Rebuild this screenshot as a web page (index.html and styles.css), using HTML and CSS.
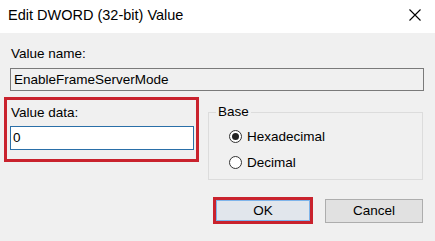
FILE: index.html
```html
<!DOCTYPE html>
<html>
<head>
<meta charset="utf-8">
<link rel="stylesheet" href="styles.css">
</head>
<body>
<div class="dialog">
  <div class="titlebar">
    <span class="title">Edit DWORD (32-bit) Value</span>
    <svg class="close" width="12" height="12" viewBox="0 0 12 12"><path d="M0.5 0.5L11.5 11.5M11.5 0.5L0.5 11.5" stroke="#000" stroke-width="1.1" fill="none"/></svg>
  </div>
  <div class="content">
    <div class="label first">Value name:</div>
    <div class="textbox disabled">EnableFrameServerMode</div>
    <div class="row">
      <div class="annot data">
        <div class="label">Value data:</div>
        <div class="textbox focus">0</div>
      </div>
      <div class="group">
        <div class="legend">Base</div>
        <div class="radio r1"><span class="dot checked"></span><span>Hexadecimal</span></div>
        <div class="radio r2"><span class="dot"></span><span>Decimal</span></div>
      </div>
    </div>
    <div class="buttons">
      <div class="annot okwrap"><div class="btn ok">OK</div></div>
      <div class="btn cancel">Cancel</div>
    </div>
  </div>
</div>
</body>
</html>
```

FILE: styles.css
```css
html, body {
  margin: 0;
  padding: 0;
  background: #f0f0f0;
}
body {
  width: 435px;
  height: 241px;
  overflow: hidden;
  font-family: "Liberation Sans", Arial, sans-serif;
  font-size: 13.5px;
  color: #000;
}
.titlebar {
  height: 33px;
  background: #fff;
  display: flex;
  align-items: center;
  justify-content: space-between;
  padding: 0 14px 0 8px;
}
.title {
  font-size: 14.5px;
  margin-top: -3px;
}
.close {
  display: block;
  margin-top: -3px;
}
.content {
  padding: 0 11px 0 10px;
}
.label {
  line-height: 16px;
  padding-left: 1px;
}
.label.first {
  margin-top: 13px;
}
.textbox {
  box-sizing: border-box;
  height: 23px;
  line-height: 21px;
  padding-left: 3px;
  border: 1px solid #7a7a7a;
  margin-top: 6px;
}
.textbox.disabled {
  background: #f0f0f0;
}
.textbox.focus {
  background: #fff;
  border-color: #2a6fa8;
  height: 24px;
  line-height: 22px;
  margin-top: 5px;
  padding-left: 2px;
}
.row {
  display: flex;
  align-items: flex-start;
  margin-top: 6px;
}
.annot {
  border: 3px solid #c9222d;
}
.data {
  width: 195px;
  box-sizing: border-box;
  margin-left: -6px;
  padding: 5px 2px 9px 3px;
}
.group {
  flex: 1;
  margin: 15px 1px 0 9px;
  border: 1px solid #dcdcdc;
  height: 68px;
  box-sizing: border-box;
  padding: 0 0 0 20px;
}
.legend {
  width: fit-content;
  background: #f0f0f0;
  line-height: 16px;
  margin: -9px 0 0 -13px;
  padding: 0 2px;
}
.radio {
  display: flex;
  align-items: center;
  height: 18px;
  gap: 5px;
}
.r1 { margin-top: 7px; }
.r2 { margin-top: 8px; }
.dot {
  box-sizing: border-box;
  width: 13px;
  height: 13px;
  border: 1px solid #333;
  border-radius: 50%;
  background: #fff;
  display: flex;
  align-items: center;
  justify-content: center;
}
.dot.checked::after {
  content: "";
  width: 7px;
  height: 7px;
  border-radius: 50%;
  background: #222;
}
.buttons {
  display: flex;
  justify-content: flex-end;
  align-items: center;
  gap: 12px;
  margin-top: 17px;
  padding-right: 1px;
}
.okwrap {
  width: 100px;
  height: 27px;
  box-sizing: border-box;
}
.btn {
  box-sizing: border-box;
  display: flex;
  align-items: center;
  justify-content: center;
  background: #e1e1e1;
  border: 1px solid #adadad;
}
.ok {
  height: 100%;
  border-color: #7eb4ea;
  background: #e1e6ec;
}
.cancel {
  width: 98px;
  height: 24px;
}
```
